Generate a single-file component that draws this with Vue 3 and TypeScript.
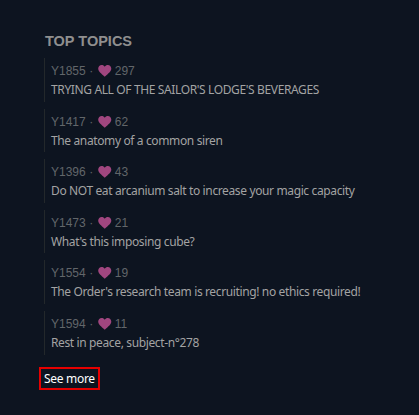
<script setup lang="ts">
interface Topic { year: string; likes: number; title: string }
const topics: Topic[] = [
  { year: 'Y1855', likes: 297, title: "TRYING ALL OF THE SAILOR'S LODGE'S BEVERAGES" },
  { year: 'Y1417', likes: 62, title: 'The anatomy of a common siren' },
  { year: 'Y1396', likes: 43, title: 'Do NOT eat arcanium salt to increase your magic capacity' },
  { year: 'Y1473', likes: 21, title: "What's this imposing cube?" },
  { year: 'Y1554', likes: 19, title: "The Order's research team is recruiting! no ethics required!" },
  { year: 'Y1594', likes: 11, title: 'Rest in peace, subject-n°278' },
]
</script>

<template>
  <main class="panel">
    <h2 class="heading">TOP TOPICS</h2>
    <ul class="list">
      <li v-for="t in topics" :key="t.year" class="topic">
        <div class="meta">
          <span>{{ t.year }}</span>
          <span class="dot">·</span>
          <svg class="heart" viewBox="0 0 24 22" width="13.5" height="12" aria-hidden="true">
            <path d="M12 21.5 C5 15.5 0 11.5 0 6.5 C0 2.8 2.8 0 6.4 0 C8.6 0 10.8 1.1 12 3 C13.2 1.1 15.4 0 17.6 0 C21.2 0 24 2.8 24 6.5 C24 11.5 19 15.5 12 21.5 Z" fill="#a0467f" />
          </svg>
          <span>{{ t.likes }}</span>
        </div>
        <div class="title">{{ t.title }}</div>
      </li>
    </ul>
    <a class="more" href="#">See more</a>
  </main>
</template>

<style scoped>
.panel {
  box-sizing: border-box;
  height: 415px;
  padding: 32px 0 0 39px;
  background: #0d1420;
  overflow: hidden;
}
.heading {
  margin: 0 0 0 6px;
  font: bold 14.5px/18px "Liberation Sans", sans-serif;
  color: #8f8f8f;
}
.list {
  list-style: none;
  margin: 8px 0 0 5px;
  padding: 0;
  display: flex;
  flex-direction: column;
  gap: 7px;
}
.topic {
  height: 43.6px;
  box-sizing: border-box;
  padding: 6px 0 0 6px;
  border-left: 1px solid #23282b;
}
.meta {
  display: flex;
  align-items: center;
  height: 14px;
  font: 12px/14px "Liberation Sans", sans-serif;
  color: #62666a;
}
.dot { margin: 0 5px 0 3.5px; }
.heart { margin-right: 3px; }
.title {
  margin-top: 3px;
  font: 12px/18px "Noto Sans", sans-serif;
  letter-spacing: -0.37px;
  color: #a3a3a3;
  white-space: nowrap;
}
.more {
  display: inline-block;
  margin-top: 12px;
  padding: 2px 3px;
  border: 2px solid #e60000;
  font: 12px/15px "Noto Sans", sans-serif;
  letter-spacing: -0.3px;
  color: #fff;
  text-decoration: none;
}
</style>
